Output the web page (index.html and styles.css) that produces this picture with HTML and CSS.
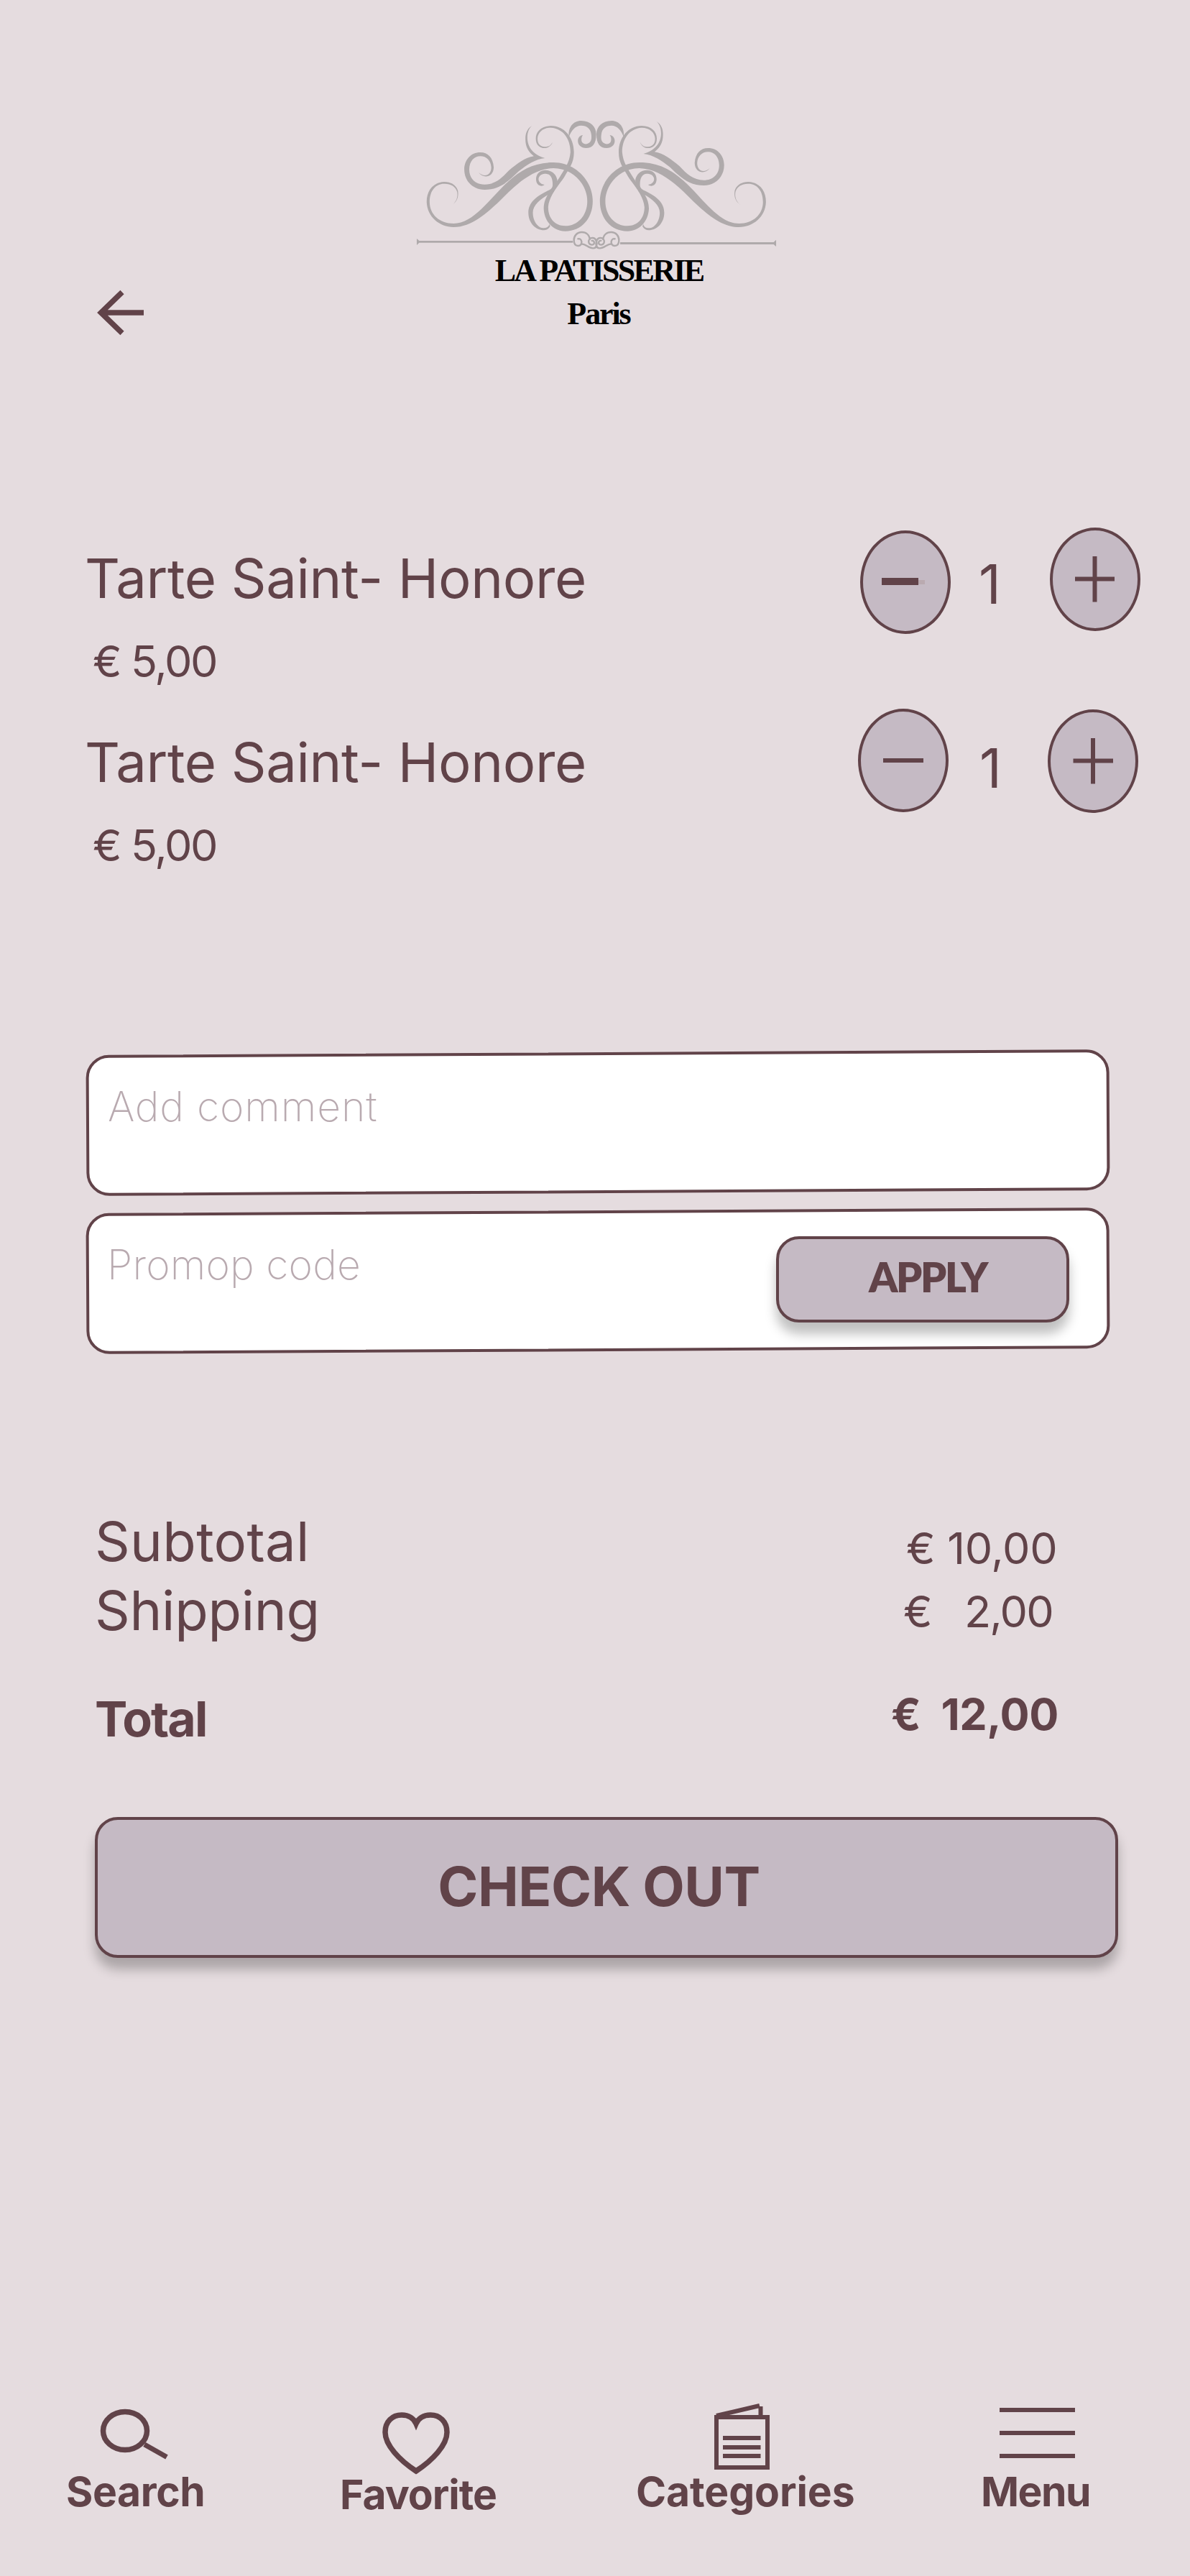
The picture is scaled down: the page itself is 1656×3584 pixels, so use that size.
FILE: index.html
```html
<!DOCTYPE html>
<html lang="en">
<head>
<meta charset="utf-8">
<title>La Patisserie Paris</title>
<link rel="stylesheet" href="styles.css">
</head>
<body>
<header class="header">
  <svg class="back" viewBox="0 0 64 64"><path d="M34 3.500L4.500 32L34 60.500M5 32H64" fill="none" stroke="currentColor" stroke-width="7.500"/></svg>
  <div class="logo">
    <svg class="ornament" viewBox="0 0 1568 591" preserveAspectRatio="none">
      <defs>
        <path id="swash" d="M200 406C222 392 228 370 224 345C216 320 192 308 168 309C125 311 98 345 98 393C100 455 150 498 207 498C280 498 340 440 392 390C450 330 520 255 610 252C690 252 747 320 747 390C747 450 708 493 658 493C615 493 589 460 589 415C592 365 635 320 655 287C675 250 693 230 693 185C693 125 655 75 600 75C560 76 539 100 539 128C539 155 555 168 575 168C590 168 602 157 607 143C598 158 590 163 575 163C556 160 546 150 546 128C547 103 568 83 600 83C650 86 679 130 679 185C675 230 655 255 635 290C605 340 571 370 571 420C573 475 610 515 658 515C725 515 769 460 769 390C769 305 700 228 610 228C530 228 480 260 430 305C355 375 290 483 207 483C150 483 110 445 110 393C110 345 135 317 168 317C195 316 214 328 221 350C226 375 215 395 200 406Z"/>
        <path id="curl" d="M308 270C325 296 368 292 369 248C366 207 345 186 315 186C276 186 250 218 250 257C250 305 285 342 332 342C395 342 430 305 470 265C500 240 540 212 576 210C540 200 508 175 505 130C504 105 510 88 523 75C503 88 497 107 497 130C497 165 510 185 531 202C495 208 465 232 430 262C400 295 375 320 332 320C295 320 270 295 270 257C271 222 290 202 315 202C340 202 357 220 359 248C359 280 333 293 308 270Z"/>
        <path id="crest" d="M673 122C668 82 690 54 722 54C760 54 783 80 783 110C783 150 768 168 742 168C722 168 709 155 709 138C709 125 717 115 729 114C722 124 722 138 727 145C735 153 745 153 752 148C765 140 765 125 763 110C761 88 745 74 722 74C700 74 682 93 673 122Z"/>
        <path id="leaf" d="M574 321C562 332 540 325 540 298C540 275 556 260 578 260C605 260 622 278 626 302L612 350L588 363C560 380 527 405 527 438C527 470 545 500 568 502C582 503 591 497 594 485L597 495C590 506 582 511 572 511C538 511 509 480 509 438C509 395 540 370 585 347C600 340 608 335 607 318C607 293 598 276 580 275C566 275 555 280 551 292C547 307 557 318 574 321Z"/>
        <path id="knot" d="M757 552C757 530 742 519 725 519C705 519 693 535 693 552C693 568 700 576 710 576C720 576 725 568 724 558C722 548 714 544 707 548M722 568C742 567 750 586 770 586C785 587 788 570 784 557C780 545 772 543 768 543C757 543 751 552 753 562C757 575 775 575 775 563C775 555 768 553 763 556"/>
      </defs>
      <g class="ink">
        <use href="#swash"/><use href="#swash" transform="translate(1567 0) scale(-1 1)"/>
        <use href="#curl"/><use href="#curl" transform="translate(1550 -18) scale(-1 1)"/>
        <use href="#crest"/><use href="#crest" transform="translate(1567 0) scale(-1 1)"/>
        <use href="#leaf"/><use href="#leaf" transform="translate(1567 0) scale(-1 1)"/>
        <path d="M58 546L68 555H689V563H68L58 573ZM1510 551L1500 561H880V570H1500L1510 579Z"/>
      </g>
      <g class="ink-line">
        <use href="#knot"/><use href="#knot" transform="translate(1568 0) scale(-1 1)"/>
      </g>
    </svg>
    <div class="brand">LA PATISSERIE</div>
    <div class="city">Paris</div>
  </div>
</header>

<main>
  <section class="items">
    <article class="item">
      <div class="info">
        <div class="name">Tarte Saint- Honore</div>
        <div class="price">€ 5,00</div>
      </div>
      <div class="stepper first">
        <button class="round minus"><svg viewBox="0 0 126 144"><path d="M80 72H90" stroke="#baaab0" stroke-width="6"/><path d="M30 71H81" stroke="currentColor" stroke-width="10"/></svg></button>
        <span class="qty">1</span>
        <button class="round"><svg viewBox="0 0 126 144"><path d="M35 71.500H90M62.500 40V103.500" stroke="currentColor" stroke-width="6"/></svg></button>
      </div>
    </article>
    <article class="item">
      <div class="info">
        <div class="name">Tarte Saint- Honore</div>
        <div class="price">€ 5,00</div>
      </div>
      <div class="stepper second">
        <button class="round"><svg viewBox="0 0 126 144"><path d="M35 72H91" stroke="currentColor" stroke-width="6"/></svg></button>
        <span class="qty">1</span>
        <button class="round plus"><svg viewBox="0 0 126 144"><path d="M35.500 71.500H91M63 40V103.500" stroke="currentColor" stroke-width="6"/></svg></button>
      </div>
    </article>
  </section>

  <section class="fields">
    <div class="field"><span class="hint comment">Add comment</span></div>
    <div class="field"><span class="hint promo">Promop code</span><button class="apply">APPLY</button></div>
  </section>

  <section class="summary">
    <div class="row"><span class="subtotal">Subtotal</span><span class="amount a-sub">€ 10,00</span></div>
    <div class="row"><span class="shipping">Shipping</span><span class="amount a-ship">€   2,00</span></div>
    <div class="row total"><span>Total</span><span class="amount a-total">€  12,00</span></div>
  </section>

  <button class="checkout">CHECK OUT</button>
</main>

<nav class="nav">
  <a class="tab search">
    <svg viewBox="92 3340 195 92"><g fill="none" stroke="currentColor"><ellipse cx="174" cy="3382" rx="30.500" ry="26.500" stroke-width="7.500"/><path d="M201 3401L232 3418.500" stroke-width="7"/></g></svg>
    Search
  </a>
  <a class="tab favorite">
    <svg viewBox="473 3344 221 92"><path d="M579 3438C556 3423 536 3402 536 3384C536 3369 546 3360 559 3360C569 3360 576 3365 579 3372C582 3365 589 3360 599 3360C612 3360 622 3369 622 3384C622 3402 602 3423 579 3438Z" fill="none" stroke="currentColor" stroke-width="7.500"/></svg>
    Favorite
  </a>
  <a class="tab categories">
    <svg viewBox="885 3340 307 92"><path d="M997 3363H1068V3433H997ZM997 3361L1057 3347M1058.500 3348V3362M1006 3392H1058.500M1006 3405H1058.500M1006 3417H1058.500" fill="none" stroke="currentColor" stroke-width="6"/></svg>
    Categories
  </a>
  <a class="tab menu">
    <svg viewBox="1365 3340 154 92"><path d="M1391 3353H1496M1391 3385H1496M1391 3417H1496" stroke="currentColor" stroke-width="6"/></svg>
    Menu
  </a>
</nav>
</body>
</html>
```
FILE: styles.css
```css
* { box-sizing: border-box; }

body {
  margin: 0;
  min-height: 3584px;
  background: #e5dcdf;
  color: #614349;
  font-family: Inter, "Liberation Sans", sans-serif;
}

svg { display: block; overflow: visible; }

button {
  margin: 0;
  padding: 0;
  border: 4px solid #614349;
  background: #c5bac4;
  color: inherit;
  font-family: inherit;
}

.header {
  display: flex;
  align-items: flex-end;
  gap: 360px;
  height: 467px;
  padding: 150px 0 0 136px;
}
.back { width: 64px; height: 64px; }
.logo {
  width: 540px;
  color: #000;
  font: 700 44px/60px "Liberation Serif", serif;
  text-align: center;
}
.ornament { width: 540px; height: 197px; }
.ink { fill: #afaaab; }
.ink-line { fill: none; stroke: #afaaab; stroke-width: 7; }
.brand { padding-left: 7px; letter-spacing: -2.7px; white-space: nowrap; }
.city { padding-left: 6px; letter-spacing: -2.1px; }

.items { padding-top: 291px; }
.item {
  display: grid;
  grid-template-columns: 1fr auto;
  align-items: start;
  height: 256px;
  padding-left: 118px;
}
.name { font-size: 76px; line-height: 92px; letter-spacing: -0.34px; }
.price {
  margin-top: 33px;
  padding-left: 11px;
  font-size: 61px;
  line-height: 74px;
  letter-spacing: -2.35px;
}
.stepper { display: flex; align-items: flex-start; }
.stepper.first { margin: -24px 69px 0 0; }
.stepper.second { margin: -28px 72px 0 0; }
.round { width: 126px; height: 144px; border-radius: 50%; }
.round svg { width: 126px; height: 144px; margin: -4px; }
.round.minus { margin-top: 4px; }
.round.plus { margin-top: 1px; }
.qty {
  width: 138px;
  padding: 32px 0 0 39px;
  font-size: 76px;
  line-height: 92px;
}
.second .qty { padding: 36px 0 0 43px; }

.fields {
  display: flex;
  flex-direction: column;
  gap: 24px;
  padding: 194px 0 0 120px;
}
.field {
  position: relative;
  display: flex;
  justify-content: space-between;
  align-items: flex-start;
  width: 1424px;
  height: 196px;
  padding: 36px 56px 0 29px;
}
/* The tilted white panel lies behind the level text */
.field::before {
  content: "";
  position: absolute;
  inset: 0;
  z-index: -1;
  border: 4px solid #614349;
  border-radius: 32px;
  background: #fff;
  transform: rotate(-0.32deg);
}
.hint {
  padding-top: 5px;
  color: #b9aab0;
  font-size: 57px;
  font-weight: 200;
  line-height: 70px;
}
.comment { padding-left: 1px; letter-spacing: 0.9px; }
.promo { letter-spacing: 0.2px; }
.apply {
  width: 408px;
  height: 120px;
  padding: 0 0 8px 14px;
  border-radius: 32px;
  box-shadow: 0 16px 16px rgba(0, 0, 0, 0.25);
  font: 800 57px/70px Lato, sans-serif;
  letter-spacing: -2.3px;
}

.summary { padding: 216px 0 0 132px; }
.row {
  display: grid;
  grid-template-columns: 1108px 1fr;
  align-items: center;
  height: 96px;
  font-size: 76px;
  line-height: 96px;
}
.subtotal { letter-spacing: 0.3px; }
.shipping { letter-spacing: -0.3px; }
.amount { position: relative; font-size: 61px; white-space: pre; letter-spacing: -0.3px; }
.a-sub { top: 10px; padding-left: 21px; }
.a-ship { top: 2px; padding-left: 17px; letter-spacing: -1.8px; }
.row.total {
  height: 84px;
  margin-top: 61px;
  font-size: 68px;
  font-weight: 700;
  line-height: 84px;
  letter-spacing: -1.9px;
}
.total .amount { top: -6px; letter-spacing: -0.4px; }

.checkout {
  display: block;
  width: 1424px;
  height: 196px;
  margin: 95px 0 0 132px;
  padding: 0 21px 4px 0;
  border-radius: 32px;
  box-shadow: 0 16px 16px rgba(0, 0, 0, 0.25);
  font-size: 76px;
  font-weight: 700;
  line-height: 92px;
  letter-spacing: -0.5px;
}

.nav {
  display: grid;
  grid-template-columns: 381px 412px 480px 154px;
  padding: 616px 0 0 92px;
  font-size: 57px;
  font-weight: 700;
  line-height: 70px;
}
.tab svg { height: 92px; }
.search { letter-spacing: -0.4px; }
.search svg { width: 195px; }
.favorite { padding-top: 4px; letter-spacing: -1px; }
.favorite svg { width: 221px; }
.categories { letter-spacing: -0.1px; }
.categories svg { width: 307px; }
.menu { letter-spacing: -1.5px; }
.menu svg { width: 154px; }
```
